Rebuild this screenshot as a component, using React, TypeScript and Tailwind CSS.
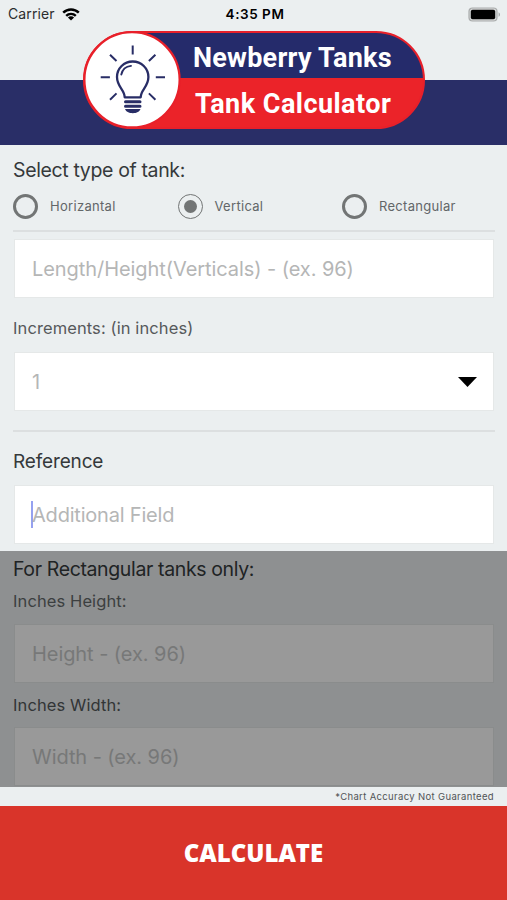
import clsx from "clsx";

const tankTypes = [
  { label: "Horizantal" },
  { label: "Vertical", selected: true },
  { label: "Rectangular" },
];

const StatusBar = () => (
  <div className="flex h-7 items-center justify-between pl-2 pr-[6px] text-black">
    <div className="flex w-[160px] items-center gap-[7px]">
      <span className="text-[14px] leading-7 tracking-[0.1px] text-[#2b2d2e]">Carrier</span>
      <svg width="18" height="13" viewBox="0 0 18 13" fill="none" stroke="black" strokeWidth="2.4">
        <path d="M1.2 4.7a11 11 0 0 1 15.6 0" />
        <path d="M4.2 7.9a6.8 6.8 0 0 1 9.6 0" />
        <path d="M9 12.6 5.9 9.5a4.4 4.4 0 0 1 6.2 0z" fill="black" stroke="none" />
      </svg>
    </div>
    <span className="ml-px text-[13.5px] font-semibold leading-7 tracking-[0.55px]">4:35 PM</span>
    <div className="flex w-[160px] justify-end">
      <svg width="33" height="15" viewBox="0 0 33 15">
        <rect x="1" y="1" width="28" height="13" rx="3.5" fill="#d4d6d6" stroke="#a9acac" strokeWidth="1.2" />
        <rect x="2.8" y="2.8" width="24.4" height="9.4" rx="1.8" fill="black" />
        <path d="M30.6 5.2c1.8.8 1.8 3.8 0 4.6z" fill="#9fa2a2" />
      </svg>
    </div>
  </div>
);

const BulbIcon = () => (
  <svg width="99" height="99" viewBox="0 0 99 99" fill="none" className="absolute left-0 top-0">
    <circle cx="49" cy="48.8" r="47.6" fill="white" stroke="#e8202a" strokeWidth="2.2" />
    <path
      d="M49.7 14.500v9M27 23.700l6.500 6.300M72.400 23.700l-6.500 6.300M17.700 46.300h9.200M72.800 46.300h9.200M27 68.700l6.500-6.300M72.400 68.700l-6.500-6.300"
      stroke="#282d66"
      strokeWidth="2"
    />
    <path
      d="M41.700 66.300c0-7.500-7.700-10.500-7.700-20.300a15.700 15.500 0 0 1 31.400 0c0 9.800-7.700 12.800-7.700 20.300z"
      stroke="#282d66"
      strokeWidth="2.3"
      strokeLinejoin="round"
    />
    <path d="M38.300 43.500c1-4.600 4.200-8 9.700-8.600" stroke="#282d66" strokeWidth="1.900" strokeLinecap="round" />
    <path d="M42.500 70.800h14.500M42.500 75.200h14.500" stroke="#282d66" strokeWidth="3" strokeLinecap="round" />
    <path d="M42 78h15.500c-.8 2.400-3.800 4.200-7.700 4.200s-7-1.800-7.800-4.200z" fill="#282d66" />
  </svg>
);

const Logo = () => (
  <div className="absolute left-[83px] top-[31px] h-[98px] w-[342px]">
    <div className="flex h-full w-full flex-col overflow-hidden rounded-full border-[2.5px] border-[#e8202a] bg-[#eb2329] font-['Roboto','Open_Sans',sans-serif] font-bold text-white">
      <div className="h-[45px] bg-[#252b6b] pl-[108px]">
        <span className="block whitespace-nowrap text-[27px] leading-[50px] tracking-[0.24px]">Newberry Tanks</span>
      </div>
      <div className="pl-[110px]">
        <span className="block whitespace-nowrap text-[27px] leading-[52px] tracking-[0.46px]">Tank Calculator</span>
      </div>
    </div>
    <BulbIcon />
  </div>
);

interface FieldProps {
  text: string;
  select?: boolean;
  focused?: boolean;
  dimmed?: boolean;
}

const Field = ({ text, select, focused, dimmed }: FieldProps) => (
  <div
    className={clsx(
      "ml-[14px] mr-[13px] flex h-[59px] items-center justify-between border-[1.5px] pl-[17px] pr-4",
      dimmed ? "border-[#8a8c8c] bg-[#999999]" : "border-[#e5e8e8] bg-white"
    )}
  >
    <div className="flex items-center">
      {focused && <span className="-ml-px -mr-px h-[27px] w-[2px] bg-[#95a1f0]" />}
      <span
        className={clsx(
          "whitespace-nowrap text-[20px] leading-none",
          focused ? "tracking-[-0.2px]" : "tracking-[-0.07px]",
          dimmed ? "text-[#777878]" : "text-[#b5b6b6]"
        )}
      >
        {text}
      </span>
    </div>
    {select && (
      <svg width="19" height="10" viewBox="0 0 19 10">
        <path d="M0 0h19L9.500 10z" fill="black" />
      </svg>
    )}
  </div>
);

const Divider = () => <div className="ml-[13px] mr-3 h-[2px] bg-[#dcdfe0]" />;

export default function App() {
  return (
    <div className="flex h-[900px] w-[507px] flex-col overflow-hidden bg-[#ebeff0] font-['Inter','Liberation_Sans',sans-serif]">
      <header className="relative h-[145px]">
        <StatusBar />
        <div className="mt-[52px] h-[65px] bg-[#292e67]" />
        <Logo />
      </header>

      <section className="h-[406px]">
        <h2 className="h-[49px] px-[13px] text-[19.5px] leading-[51px] tracking-[-0.36px] text-[#35393b]">
          Select type of tank:
        </h2>
        <div className="grid h-[25px] grid-cols-[164.500px_164.500px_1fr] pl-[13px]">
          {tankTypes.map((type) => (
            <div key={type.label} className="flex items-center gap-3">
              <span
                className={clsx(
                  "flex size-[25px] items-center justify-center rounded-full border-[#727575]",
                  type.selected ? "border-[1.5px]" : "border-[3px]"
                )}
              >
                {type.selected && <span className="size-[13px] rounded-full bg-[#727575]" />}
              </span>
              <span className="text-[13px] tracking-[0.3px] text-[#626668]">{type.label}</span>
            </div>
          ))}
        </div>
        <div className="pb-[7px] pt-[11px]">
          <Divider />
        </div>
        <Field text="Length/Height(Verticals) - (ex. 96)" />
        <p className="h-[54px] px-[13px] text-[16.5px] leading-[60px] tracking-[0.1px] text-[#56595b]">
          Increments: (in inches)
        </p>
        <Field text="1" select />
        <div className="pb-[7px] pt-[19px]">
          <Divider />
        </div>
        <h3 className="h-[46px] px-[13px] text-[19px] leading-[46px] tracking-[-0.15px] text-[#35393b]">Reference</h3>
        <Field text="Additional Field" focused />
      </section>

      <section className="h-[236px] overflow-hidden bg-[#8e9091]">
        <h2 className="h-[34px] px-[13px] text-[19.5px] leading-[36px] tracking-[-0.37px] text-[#202324]">
          For Rectangular tanks only:
        </h2>
        <p className="h-[39px] px-[13px] text-[16.5px] leading-[32px] tracking-[0.1px] text-[#3c3f40]">
          Inches Height:
        </p>
        <Field text="Height - (ex. 96)" dimmed />
        <p className="h-[44px] px-[13px] text-[16.5px] leading-[44px] tracking-[0.1px] text-[#323536]">
          Inches Width:
        </p>
        <Field text="Width - (ex. 96)" dimmed />
      </section>

      <p className="h-[19px] pr-[13px] text-right text-[9.5px] leading-[19px] tracking-[0.35px] text-[#515456]">
        *Chart Accuracy Not Guaranteed
      </p>
      <button className="flex-1 bg-[#d9342a] font-['Open_Sans',sans-serif] text-[24px] font-extrabold text-white">
        CALCULATE
      </button>
    </div>
  );
}
